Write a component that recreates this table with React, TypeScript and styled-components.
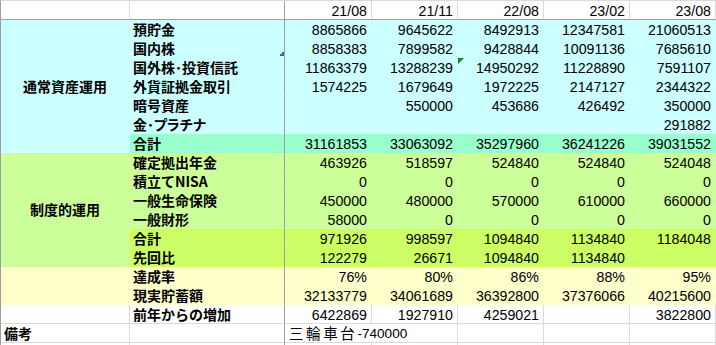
import React from 'react';
import styled, { createGlobalStyle } from 'styled-components';

const GRID = '#dadada';
const FROZEN = '#9d9d9d';

const CYAN = '#ccffff';
const MINT = '#99ffcc';
const GREEN = '#ccff99';
const LIME = '#ccff66';
const CREAM = '#ffffcc';

const GlobalStyle = createGlobalStyle`
  html, body {
    margin: 0;
    padding: 0;
    background: #fff;
    overflow: hidden;
  }
  body {
    font-family: 'Liberation Sans', Arial, 'Noto Sans CJK JP', sans-serif;
    color: #000;
  }
`;

const Sheet = styled.div`
  display: grid;
  grid-template-columns: 129px 155px 87px 86px 86px 86px 86px;
  grid-auto-rows: 19px;
  width: 716px;
  box-sizing: border-box;
  border-left: 1px solid ${FROZEN};
  border-top: 1px solid ${GRID};
`;

interface CellProps {
  $bg?: string;
  $edge?: string;
  $base?: string;
  $span?: number;
}

const Cell = styled.div<CellProps>`
  position: relative;
  box-sizing: border-box;
  min-width: 0;
  background: ${p => p.$bg ?? '#fff'};
  border-right: 1px solid ${p => p.$edge ?? p.$bg ?? GRID};
  border-bottom: 1px solid ${p => p.$base ?? p.$bg ?? GRID};
  white-space: nowrap;
  overflow: hidden;
  ${p => (p.$span ? `grid-column: span ${p.$span};` : '')}
`;

const NumCell = styled(Cell)`
  text-align: right;
  padding: 3px 4px 0 0;
  font-family: 'Liberation Sans', Arial, sans-serif;
  font-size: 14.2px;
  line-height: 15px;
`;

const LabelCell = styled(Cell)<{ $palt?: boolean }>`
  padding-left: 3px;
  font-family: 'Noto Sans CJK JP', sans-serif;
  font-weight: 700;
  font-size: 14px;
  line-height: 18px;
  ${p => (p.$palt ? `font-feature-settings: 'palt';` : '')}
`;

const Category = styled(Cell)<{ $from: number; $rows: number }>`
  grid-column: 1;
  grid-row: ${p => p.$from} / span ${p => p.$rows};
  display: flex;
  align-items: center;
  justify-content: center;
  padding-bottom: 1px;
  font-family: 'Noto Sans CJK JP', sans-serif;
  font-weight: 700;
  font-size: 14px;
`;

const NoteCell = styled(Cell)`
  display: flex;
  align-items: center;
  padding-left: 4px;
  overflow: visible;
`;

const NoteKanji = styled.span`
  font-family: 'Noto Sans CJK JP', sans-serif;
  font-size: 14.5px;
  line-height: 18px;
  letter-spacing: 2.6px;
`;

const NoteAmount = styled.span`
  font-family: 'Liberation Sans', Arial, sans-serif;
  font-size: 13.6px;
  line-height: 18px;
  padding-top: 1px;
`;

const ErrorMark = styled.span`
  position: absolute;
  top: 0;
  left: 0;
  width: 0;
  height: 0;
  border-top: 6px solid #118811;
  border-right: 6px solid transparent;
`;

const HandleMark = styled.span`
  position: absolute;
  right: 0;
  bottom: 1px;
  width: 4px;
  height: 4px;
  background: #4b58b4;
  clip-path: polygon(50% 0, 100% 0, 100% 100%, 0 100%, 0 50%, 50% 50%);
`;

type Row = {
  label: string;
  values: string[];
  bg?: string;
  palt?: boolean;
};

const dates = ['21/08', '21/11', '22/08', '23/02', '23/08'];

const rows: Row[] = [
  { label: '預貯金', values: ['8865866', '9645622', '8492913', '12347581', '21060513'], bg: CYAN },
  { label: '国内株', values: ['8858383', '7899582', '9428844', '10091136', '7685610'], bg: CYAN },
  { label: '国外株･投資信託', values: ['11863379', '13288239', '14950292', '11228890', '7591107'], bg: CYAN, palt: true },
  { label: '外貨証拠金取引', values: ['1574225', '1679649', '1972225', '2147127', '2344322'], bg: CYAN },
  { label: '暗号資産', values: ['', '550000', '453686', '426492', '350000'], bg: CYAN },
  { label: '金･プラチナ', values: ['', '', '', '', '291882'], bg: CYAN, palt: true },
  { label: '合計', values: ['31161853', '33063092', '35297960', '36241226', '39031552'], bg: MINT },
  { label: '確定拠出年金', values: ['463926', '518597', '524840', '524840', '524048'], bg: GREEN },
  { label: '積立てNISA', values: ['0', '0', '0', '0', '0'], bg: GREEN },
  { label: '一般生命保険', values: ['450000', '480000', '570000', '610000', '660000'], bg: GREEN },
  { label: '一般財形', values: ['58000', '0', '0', '0', '0'], bg: GREEN },
  { label: '合計', values: ['971926', '998597', '1094840', '1134840', '1184048'], bg: LIME },
  { label: '先回比', values: ['122279', '26671', '1094840', '1134840', ''], bg: LIME },
  { label: '達成率', values: ['76%', '80%', '86%', '88%', '95%'], bg: CREAM },
  { label: '現実貯蓄額', values: ['32133779', '34061689', '36392800', '37376066', '40215600'], bg: CREAM },
  { label: '前年からの増加', values: ['6422869', '1927910', '4259021', '', '3822800'] },
];

export default function App() {
  return (
    <>
      <GlobalStyle />
      <Sheet>
        {/* header */}
        <Cell $base={FROZEN} />
        <Cell $base={FROZEN} $edge={FROZEN} />
        {dates.map(d => (
          <NumCell key={d} $base={FROZEN}>
            {d}
          </NumCell>
        ))}

        <Category $from={2} $rows={7} $bg={CYAN}>
          通常資産運用
        </Category>
        <Category $from={9} $rows={6} $bg={GREEN}>
          制度的運用
        </Category>
        <Category $from={15} $rows={2} $bg={CREAM} />

        {rows.map((r, i) => (
          <React.Fragment key={i}>
            {i === rows.length - 1 && <Cell />}
            <LabelCell $bg={r.bg} $edge={FROZEN} $palt={r.palt}>
              {r.label}
              {i === 1 && <HandleMark />}
            </LabelCell>
            {r.values.map((v, j) => (
              <NumCell key={j} $bg={r.bg}>
                {i === 2 && j === 2 && <ErrorMark />}
                {v}
              </NumCell>
            ))}
          </React.Fragment>
        ))}

        {/* notes */}
        <LabelCell>備考</LabelCell>
        <Cell $edge={FROZEN} />
        <NoteCell $span={2}>
          <NoteKanji>三輪車台</NoteKanji>
          <NoteAmount>-740000</NoteAmount>
        </NoteCell>
        <Cell />
        <Cell />
        <Cell />

        <Cell />
        <Cell $edge={FROZEN} />
        <Cell />
        <Cell />
        <Cell />
        <Cell />
        <Cell />
      </Sheet>
    </>
  );
}
